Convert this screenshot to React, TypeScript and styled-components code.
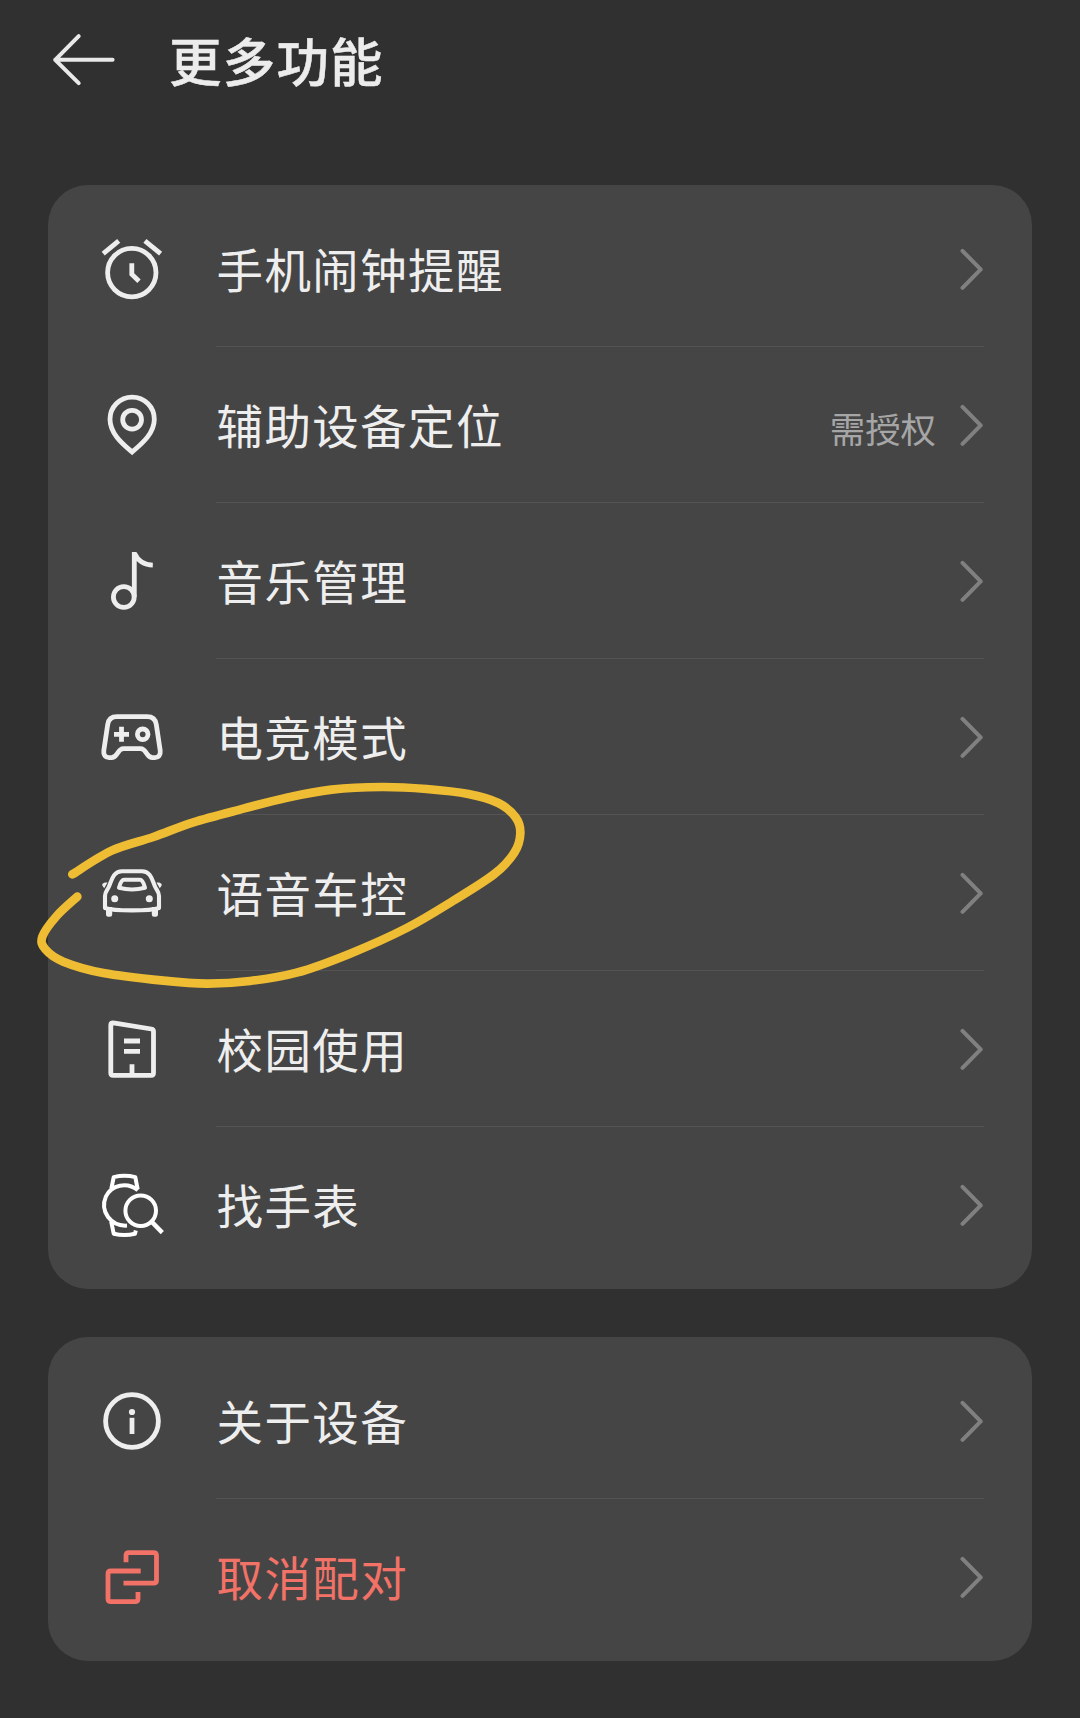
import React from "react";
import styled, { createGlobalStyle } from "styled-components";

const GlobalStyle = createGlobalStyle`
  * { box-sizing: border-box; }
  body {
    margin: 0;
    background: #303030;
    font-family: "Noto Sans CJK SC", "Noto Sans", sans-serif;
  }
`;

const Page = styled.main`
  position: relative;
  width: 1080px;
  height: 1718px;
  overflow: hidden;
  background: #303030;
`;

const Header = styled.header`
  display: flex;
  align-items: center;
  gap: 49px;
  height: 119px;
  padding-left: 48px;
`;

const BackButton = styled.button`
  display: flex;
  padding: 0;
  border: 0;
  background: none;
  color: #e9e9e9;
`;

const Title = styled.h1`
  margin: 0;
  padding-bottom: 2px;
  font-size: 52.5px;
  font-weight: 500;
  line-height: 76px;
  letter-spacing: 1.2px;
  color: #ececec;
  -webkit-text-stroke: 0.5px currentColor;
`;

const Content = styled.div`
  display: flex;
  flex-direction: column;
  gap: 48px;
  padding: 66px 48px 0;
`;

const Card = styled.section`
  padding: 6px 48px;
  border-radius: 40px;
  background: #454545;
`;

const Row = styled.div<{ $danger?: boolean }>`
  display: flex;
  align-items: center;
  gap: 48px;
  height: 156px;
  color: ${(p) => (p.$danger ? "#f27267" : "#eeeeee")};
`;

const RowBody = styled.div<{ $last: boolean }>`
  display: flex;
  flex: 1;
  align-items: center;
  height: 156px;
  box-shadow: ${(p) => (p.$last ? "none" : "inset 0 -1px 0 #535353")};
`;

const Label = styled.span`
  flex: 1;
  padding: 0 0 3px 0.5px;
  font-size: 46.5px;
  line-height: 66px;
  letter-spacing: 1.4px;
`;

const Note = styled.span`
  margin-right: 24px;
  padding-top: 6px;
  font-size: 35.4px;
  line-height: 50px;
  color: #a6a6a6;
`;

const Chevron = styled.svg`
  display: block;
  width: 24px;
  height: 44px;
  fill: none;
  stroke: #808080;
  stroke-width: 4px;
  stroke-linecap: round;
  stroke-linejoin: round;
`;

const Glyph = styled.svg<{ $weight?: number }>`
  display: block;
  flex: none;
  width: 72px;
  height: 72px;
  fill: none;
  stroke: currentColor;
  stroke-width: ${(p) => p.$weight ?? 4.8}px;

  .solid {
    fill: currentColor;
    stroke: none;
  }
`;

const Scribble = styled.svg`
  position: absolute;
  left: 30px;
  top: 770px;
  width: 510px;
  height: 230px;
  fill: none;
  stroke: #efbd33;
  stroke-width: 26px;
  stroke-linecap: round;
  stroke-linejoin: round;
  pointer-events: none;
`;

const AlarmIcon = () => (
  <Glyph viewBox="0 0 72 72">
    <circle cx="35.8" cy="39.6" r="24.2" />
    <path d="M7.2 20.7 22.7 7.8M48.9 7.8 64.6 20.7M35.8 30.3V41.3L43 48.3" />
  </Glyph>
);

const PinIcon = () => (
  <Glyph viewBox="0 0 72 72">
    <path d="M36.1 63C27.5 55.5 14 45 14 30.2A22.15 22.15 0 0 1 58.3 30.2C58.3 45 44.7 55.5 36.1 63Z" />
    <circle cx="36.1" cy="30.7" r="9.4" />
  </Glyph>
);

const MusicIcon = () => (
  <Glyph viewBox="0 0 72 72">
    <circle cx="27.8" cy="52" r="10.4" />
    <path d="M38.3 7V52M38.3 8C42 16 48.5 20 56.8 20.2" />
  </Glyph>
);

const GamepadIcon = () => (
  <Glyph viewBox="0 0 72 72">
    <path d="M21 15.6H51C56.5 15.6 59.6 18.5 60.3 23.5L64.2 49.5C64.8 54 62.5 56.6 59 56.6H56.5C50 56.6 51 47.7 44.5 47.7H27.5C21 47.7 22 56.6 15.5 56.6H13C9.5 56.6 7.2 54 7.8 49.5L11.7 23.5C12.4 18.5 15.5 15.6 21 15.6Z" />
    <path d="M18 33.3H33M25.5 25.8V40.8" />
    <circle cx="46.7" cy="33.3" r="5.3" />
  </Glyph>
);

const CarIcon = () => (
  <Glyph viewBox="0 0 72 72" $weight={4.1}>
    <path
      strokeLinejoin="round"
      d="M26 14.2H46C54.5 14.2 55.8 22 59 29.5C60.5 33 63 34.5 63 39V51C54 54.2 18 54.2 9 51V39C9 34.5 11.5 33 13 29.5C16.2 22 17.5 14.2 26 14.2Z"
    />
    <path
      strokeLinejoin="round"
      d="M28 22.8H44C46.5 22.8 47.8 26.5 49 30.7C41.5 32.7 30.5 32.7 23 30.7C24.2 26.5 25.5 22.8 28 22.8Z"
    />
    <circle className="solid" cx="18.7" cy="41.7" r="3.5" />
    <circle className="solid" cx="53.3" cy="41.7" r="3.5" />
    <path
      className="solid"
      d="M10 50H16.2V57.5Q16.2 59.8 14 59.8H12.2Q10 59.8 10 57.5ZM55.8 50H62V57.5Q62 59.8 59.8 59.8H58Q55.8 59.8 55.8 57.5ZM11.5 25.5C7.5 25 5.5 27 6.5 28.8L8.2 31.3ZM60.5 25.5C64.5 25 66.5 27 65.5 28.8L63.8 31.3Z"
    />
  </Glyph>
);

const BuildingIcon = () => (
  <Glyph viewBox="0 0 72 72">
    <path d="M14.8 12Q14.8 9.4 17.4 9.9L55.4 16Q57.5 16.4 57.5 18.6V60Q57.5 62.3 55.2 62.3H17.1Q14.8 62.3 14.8 60Z" />
    <path d="M28 28H44M28 38.4H44M36 51.2V61" />
  </Glyph>
);

const WatchSearchIcon = () => (
  <Glyph viewBox="0 0 72 72" $weight={4} color="#ffffff">
    <path d="M41.8 21.2C31 12.5 15.5 15.8 9.9 27.5C3.5 42.5 15 57.5 31 56.6" />
    <path
      strokeLinejoin="round"
      d="M15.4 19.5 17.7 8.1Q28.5 5.6 39.3 8.1L41.7 20.5M15.2 52.5 17.7 64.7Q28.5 67.2 39 64.7L39.8 61.5"
    />
    <circle cx="44.7" cy="41.7" r="15.3" />
    <path strokeWidth="4.4" d="M55.3 52.4 66.3 63.6" />
  </Glyph>
);

const InfoIcon = () => (
  <Glyph viewBox="0 0 72 72">
    <circle cx="36" cy="36" r="26.4" />
    <circle className="solid" cx="36" cy="27" r="3.1" />
    <path d="M36 32.8V49" />
  </Glyph>
);

const UnpairIcon = () => (
  <Glyph viewBox="0 0 72 72">
    <path d="M30 21.3V14.6Q30 11.6 33 11.6H57.5Q60.5 11.6 60.5 14.6V39.2Q60.5 42.2 57.5 42.2H27.5M44.7 30H15Q12 30 12 33V57.7Q12 60.7 15 60.7H39Q42 60.7 42 57.7V51" />
  </Glyph>
);

type Item = {
  label: string;
  Icon: () => React.ReactElement;
  note?: string;
  danger?: boolean;
};

const groups: Item[][] = [
  [
    { label: "手机闹钟提醒", Icon: AlarmIcon },
    { label: "辅助设备定位", Icon: PinIcon, note: "需授权" },
    { label: "音乐管理", Icon: MusicIcon },
    { label: "电竞模式", Icon: GamepadIcon },
    { label: "语音车控", Icon: CarIcon },
    { label: "校园使用", Icon: BuildingIcon },
    { label: "找手表", Icon: WatchSearchIcon },
  ],
  [
    { label: "关于设备", Icon: InfoIcon },
    { label: "取消配对", Icon: UnpairIcon, danger: true },
  ],
];

// Sampled points of the hand-drawn loop, in thirds of a pixel.
const loop: [number, number][] = [
  [127, 313], [245, 242], [370, 201], [490, 157], [640, 116], [770, 83],
  [905, 59], [1055, 51], [1190, 57], [1315, 72], [1405, 99], [1457, 142],
  [1471, 190], [1453, 248], [1393, 312], [1270, 392], [1130, 474],
  [960, 551], [800, 608], [660, 633], [530, 641], [400, 632], [220, 609],
  [100, 575], [46, 538], [37, 500], [80, 438], [142, 380],
];

// Catmull-Rom spline through the points, written as cubic Béziers.
function smooth(points: [number, number][]) {
  const at = (i: number) => points[Math.max(0, Math.min(points.length - 1, i))];
  let d = `M${points[0].join(" ")}`;
  for (let i = 0; i < points.length - 1; i++) {
    const [a, b, c, e] = [at(i - 1), at(i), at(i + 1), at(i + 2)];
    d += `C${b[0] + (c[0] - a[0]) / 6} ${b[1] + (c[1] - a[1]) / 6} ${
      c[0] - (e[0] - b[0]) / 6
    } ${c[1] - (e[1] - b[1]) / 6} ${c[0]} ${c[1]}`;
  }
  return d;
}

export default function App() {
  return (
    <>
      <GlobalStyle />
      <Page>
        <Header>
          <BackButton aria-label="返回">
            <Glyph viewBox="0 0 72 72" $weight={4} strokeLinecap="round" strokeLinejoin="round">
              <path d="M30.7 12.2 7.2 35.8 30.7 59.2M7.2 35.8H64.6" />
            </Glyph>
          </BackButton>
          <Title>更多功能</Title>
        </Header>
        <Content>
          {groups.map((items, g) => (
            <Card key={g}>
              {items.map(({ label, Icon, note, danger }, i) => (
                <Row key={label} $danger={danger}>
                  <Icon />
                  <RowBody $last={i === items.length - 1}>
                    <Label>{label}</Label>
                    {note && <Note>{note}</Note>}
                    <Chevron viewBox="0 0 24 44">
                      <path d="M2.5 3.9 20.7 22.4 2.5 40.8" />
                    </Chevron>
                  </RowBody>
                </Row>
              ))}
            </Card>
          ))}
        </Content>
        <Scribble viewBox="0 0 1530 690">
          <path d={smooth(loop)} />
        </Scribble>
      </Page>
    </>
  );
}
